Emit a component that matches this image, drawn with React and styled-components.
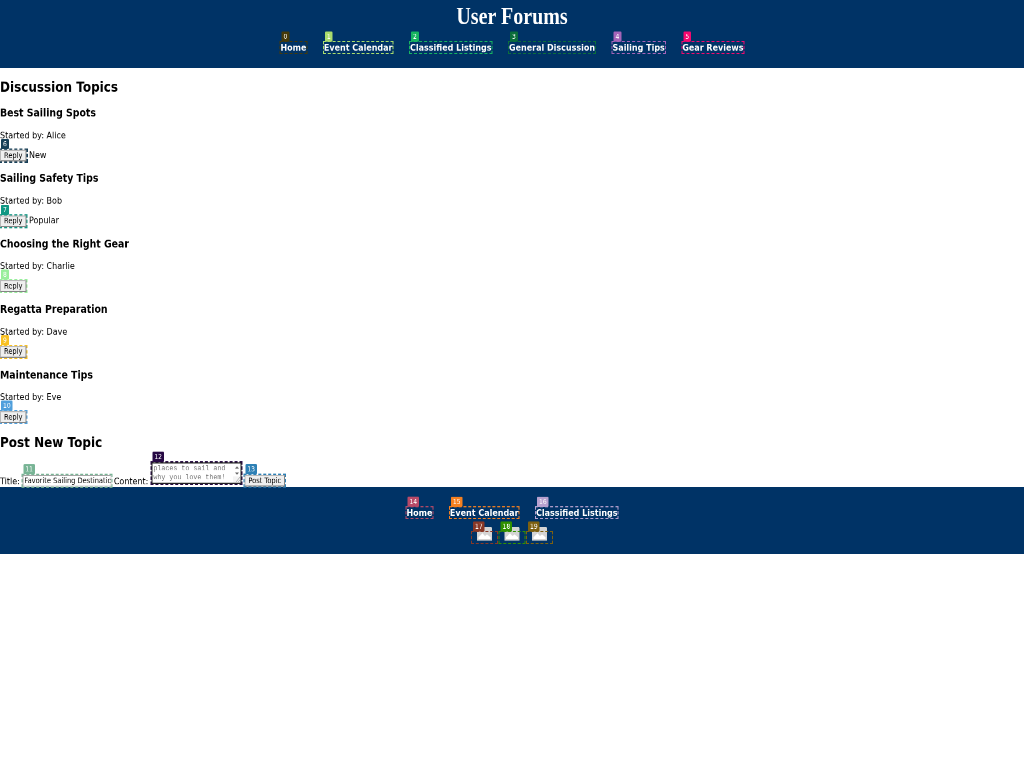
import React from "react";
import styled, { createGlobalStyle } from "styled-components";

const GlobalStyle = createGlobalStyle`
  html, body { margin: 0; padding: 0; background: #fff; }
  * { box-sizing: border-box; }
`;
const Viewport = styled.div`
  width: 1024px; height: 768px; overflow: hidden; background: #fff;
`;
const Page = styled.div`
  width: 2048px; height: 1365px;
  transform: scale(0.5, 0.5625);
  transform-origin: 0 0;
  will-change: transform;
  background: #fff;
  font: 16px/19px "DejaVu Sans", sans-serif;
  color: #000;
`;
const Header = styled.header`
  height: 121px; padding-top: 5px; background: #003366; color: #fff;
  display: flex; flex-direction: column; align-items: center;
`;
const Title = styled.h1`
  margin: 0 0 24px; font: bold 40px/46px "Liberation Serif", serif;
  transform: scaleY(1.12);
`;
const Nav = styled.nav`
  display: flex; justify-content: center; gap: 35px;
`;
const Marked = styled.span`
  position: relative; display: inline-block; vertical-align: baseline;
  outline: 2px dashed ${(p) => p.$color};
`;
const NavLink = styled.a`
  display: block; color: #fff; font-weight: bold; text-decoration: none; white-space: nowrap;
`;
const Badge = styled.span`
  position: absolute; left: 2px; top: -19px; z-index: 2;
  height: 18px; padding: 0 4px; border-radius: 2px;
  background: ${(p) => p.$color}; color: #fff;
  font: 12px/18px "DejaVu Sans", sans-serif;
`;
const SectionTitle = styled.h2`
  margin: 0; padding: 20px 0; font-size: 24px; line-height: 28px;
`;
const TopicList = styled.div`
  display: flex; flex-direction: column; gap: 18.7px; padding-top: 1px;
`;
const Topic = styled.article`
  height: 97.7px;
`;
const TopicTitle = styled.h3`
  margin: 0 0 18.7px; font-size: 18.72px; line-height: 22px;
`;
const Author = styled.p`
  margin: 0 0 16px;
`;
const Actions = styled.div`
  display: flex; align-items: baseline; gap: 5px;
`;
const Button = styled.button`
  display: block; margin: 0; height: 21px; padding: 0 6px;
  border: 2px solid; border-color: #b8b8b8 #858585 #858585 #b8b8b8;
  border-radius: 0; background: #efefef; color: #000;
  font: 13.333px/16px "DejaVu Sans", sans-serif; white-space: nowrap;
`;
const Form = styled.div`
  display: flex; align-items: flex-end; gap: 5px; height: 45px; padding-bottom: 1px;
`;
const TextInput = styled.div`
  width: 178px; height: 21px; padding: 1px 2px; overflow: hidden;
  border: 2px solid; border-color: #a5a5a5 #d8d8d8 #d8d8d8 #a5a5a5; background: #fff;
  font: 13.333px/15px "DejaVu Sans", sans-serif; white-space: nowrap;
`;
const TextArea = styled.div`
  display: flex; justify-content: space-between;
  width: 180px; height: 38px; padding: 1px 0 0 2px; overflow: hidden;
  border: 2px solid #222; background: #fff; color: #757575;
  font: 13.333px/16px "Liberation Mono", monospace; white-space: pre;
`;
const AreaSlot = styled.div`
  margin: 0 1px 5px 1px; line-height: 0;
`;
const Controls = styled.svg`
  display: block; flex: none; width: 15px; height: 34px;
`;
const Footer = styled.footer`
  height: 119px; padding-top: 36px; background: #003366;
`;
const Social = styled.div`
  display: flex; justify-content: center; gap: 5px; margin-top: 25px;
`;
const SocialLink = styled.a`
  display: flex; justify-content: center; width: 50px; height: 19px;
`;
const ImageIcon = styled.svg`
  display: block; flex: none; width: 32px; height: 24px; margin-top: -9px;
`;

const Mark = ({ n, color, children }) => (
  <Marked $color={color}>
    {children}
    <Badge $color={color}>{n}</Badge>
  </Marked>
);

const headerLinks = [
  ["Home", "#463a08"], ["Event Calendar", "#a9dc6c"], ["Classified Listings", "#17b460"],
  ["General Discussion", "#0b6e3b"], ["Sailing Tips", "#a564b8"], ["Gear Reviews", "#f5086f"],
];
const topics = [
  ["Best Sailing Spots", "Alice", "New", "#173f57"],
  ["Sailing Safety Tips", "Bob", "Popular", "#109783"],
  ["Choosing the Right Gear", "Charlie", "", "#98ee9c"],
  ["Regatta Preparation", "Dave", "", "#f8c022"],
  ["Maintenance Tips", "Eve", "", "#4f9fdc"],
];
const footerLinks = [["Home", "#b84a68"], ["Event Calendar", "#f58020"], ["Classified Listings", "#b7a1cf"]];
const socialColors = ["#883827", "#309000", "#7d6010"];

export default function App() {
  return (
    <Viewport>
      <GlobalStyle />
      <Page>
        <Header>
          <Title>User Forums</Title>
          <Nav>
            {headerLinks.map(([label, color], i) => (
              <Mark key={label} n={i} color={color}><NavLink>{label}</NavLink></Mark>
            ))}
          </Nav>
        </Header>
        <main>
          <SectionTitle>Discussion Topics</SectionTitle>
          <TopicList>
            {topics.map(([title, author, tag, color], i) => (
              <Topic key={title}>
                <TopicTitle>{title}</TopicTitle>
                <Author>Started by: {author}</Author>
                <Actions>
                  <Mark n={i + 6} color={color}><Button>Reply</Button></Mark>
                  {tag && <span>{tag}</span>}
                </Actions>
              </Topic>
            ))}
          </TopicList>
          <SectionTitle>Post New Topic</SectionTitle>
          <Form>
            <span>Title:</span>
            <Mark n={11} color="#78b495"><TextInput>Favorite Sailing Destinations</TextInput></Mark>
            <span>Content:</span>
            <AreaSlot>
              <Mark n={12} color="#260844">
                <TextArea>
                  <span>{"places to sail and\nwhy you love them!"}</span>
                  <Controls viewBox="0 0 15 34">
                    <path d="M4 8l4-4 4 4zM4 15l4 4 4-4z" fill="#666" />
                    <path d="M0 22h15v12H0z" fill="#f4f4f4" />
                    <path d="M6 32L14 23M10 32l4-4" stroke="#888" fill="none" />
                  </Controls>
                </TextArea>
              </Mark>
            </AreaSlot>
            <Mark n={13} color="#2e80b5"><Button>Post Topic</Button></Mark>
          </Form>
        </main>
        <Footer>
          <Nav>
            {footerLinks.map(([label, color], i) => (
              <Mark key={label} n={i + 14} color={color}><NavLink>{label}</NavLink></Mark>
            ))}
          </Nav>
          <Social>
            {socialColors.map((color, i) => (
              <Mark key={color} n={i + 17} color={color}>
                <SocialLink>
                  <ImageIcon viewBox="0 0 32 24" preserveAspectRatio="none">
                    <path d="M1 0h29l1 2v22H1z" fill="#d4d4d4" />
                    <path d="M4 21v-3l8-7 5 5 4-3 7 5v3z" fill="#fff" />
                  </ImageIcon>
                </SocialLink>
              </Mark>
            ))}
          </Social>
        </Footer>
      </Page>
    </Viewport>
  );
}
